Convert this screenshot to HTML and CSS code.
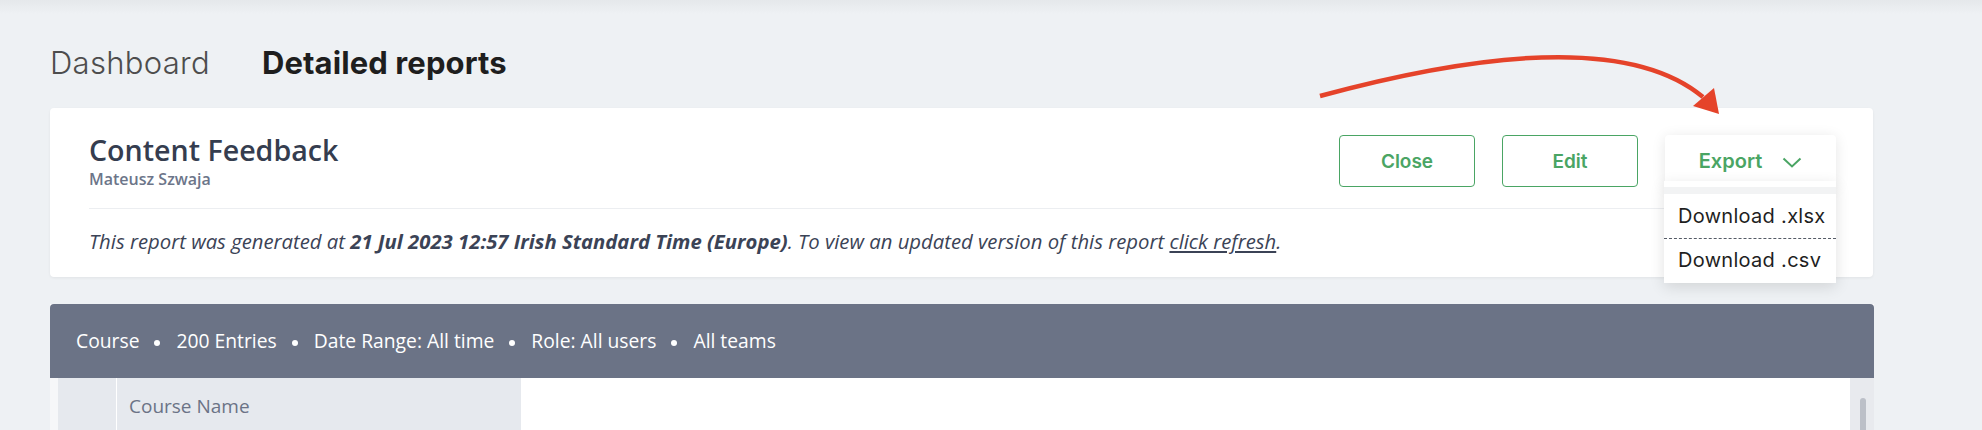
FILE: index.html
```html
<!DOCTYPE html>
<html lang="en">
<head>
    <meta charset="UTF-8">
    <meta name="viewport" content="width=device-width, initial-scale=1.0">
    <title>Detailed reports - Content Feedback</title>
    <link rel="stylesheet" href="styles.css">
</head>
<body>
    <div class="page">
        <nav class="tabs">
            <a class="tab" href="#">Dashboard</a>
            <a class="tab active" href="#">Detailed reports</a>
        </nav>

        <section class="report-card">
            <div class="report-head">
                <div class="report-title">
                    <h1>Content Feedback</h1>
                    <div class="author">Mateusz Szwaja</div>
                </div>
                <div class="actions">
                    <button class="btn" type="button">Close</button>
                    <button class="btn" type="button">Edit</button>
                    <div class="export">
                        <button class="export-btn" type="button">
                            Export
                            <svg class="chevron" width="20" height="11" viewBox="0 0 20 11"><polyline points="1.5,1.5 10,9.5 18.5,1.5" fill="none" stroke="#4aa564" stroke-width="2"/></svg>
                        </button>
                        <ul class="export-menu">
                            <li>Download .xlsx</li>
                            <li>Download .csv</li>
                        </ul>
                    </div>
                </div>
            </div>
            <p class="generated">This report was generated at <b>21 Jul 2023 12:57 Irish Standard Time (Europe)</b>. To view an updated version of this report <a href="#">click refresh</a>.</p>
        </section>

        <section class="table-panel">
            <div class="filters">Course<span class="dot"></span>200 Entries<span class="dot"></span>Date Range: All time<span class="dot"></span>Role: All users<span class="dot"></span>All teams</div>
            <div class="thead">
                <div class="edge"></div>
                <div class="th th-check"></div>
                <div class="th th-name">Course Name</div>
                <div class="th-fill"></div>
                <div class="scroll-track"><span class="thumb"></span></div>
            </div>
        </section>

        <!-- red annotation arrow pointing at Export -->
        <svg class="annotation" width="1982" height="430" viewBox="0 0 1982 430">
            <path d="M1320 96 C1460 58 1625 32 1703 97" fill="none" stroke="#e5432a" stroke-width="4.5"/>
            <polygon points="1693,106 1714,88 1719,114" fill="#e5432a"/>
        </svg>
    </div>
</body>
</html>
```

FILE: styles.css
```css
html, body {
    margin: 0;
    overflow: hidden;
}
body {
    background: linear-gradient(#e5e8eb 0, #eef1f4 14px) #eef1f4;
    font-family: "Open Sans", sans-serif;
}
.page {
    position: relative;
    height: 430px;
    padding: 45px 108px 0 50px;
    box-sizing: border-box;
}

.tabs {
    display: flex;
    gap: 52px;
    height: 36px;
}
.tab {
    font-family: Inter, sans-serif;
    font-size: 31px;
    line-height: 36px;
    font-weight: 300;
    letter-spacing: 0.3px;
    color: #4d4d4d;
    text-decoration: none;
}
.tab.active {
    font-weight: 700;
    letter-spacing: 0.1px;
    color: #1e1e1e;
}

.report-card {
    margin-top: 27px;
    background: white;
    border-radius: 4px;
    box-shadow: 0 1px 3px rgba(0, 0, 0, 0.06);
    padding: 25px 37px 23px 39px;
    width: 1823px;
    box-sizing: border-box;
}
.report-head {
    display: flex;
    justify-content: space-between;
    align-items: center;
    padding-bottom: 19px;
    border-bottom: 1px solid #eceef1;
}
.report-title h1 {
    margin: 0;
    font-size: 28.6px;
    line-height: 34px;
    font-weight: 600;
    color: #353d4f;
}
.author {
    margin-top: 2px;
    font-size: 16px;
    line-height: 20px;
    font-weight: 600;
    color: #6c7589;
}
.actions {
    display: flex;
    gap: 27px;
    align-items: center;
}
.btn {
    width: 136px;
    height: 52px;
    background: white;
    border: 1px solid #4aa564;
    border-radius: 4px;
    color: #4aa564;
    font-family: Inter, sans-serif;
    font-size: 19px;
    font-weight: 600;
    cursor: pointer;
}
.export {
    position: relative;
}
.export-btn {
    width: 171px;
    height: 52px;
    display: flex;
    align-items: center;
    justify-content: center;
    gap: 20px;
    background: white;
    border: none;
    border-radius: 4px;
    box-shadow: 0 2px 14px rgba(0, 0, 0, 0.10);
    color: #4aa564;
    font-family: Inter, sans-serif;
    font-size: 20px;
    font-weight: 600;
    cursor: pointer;
}
.chevron {
    margin-top: 2px;
}
.export-menu {
    position: absolute;
    top: 46px;
    left: -1px;
    width: 172px;
    margin: 0;
    padding: 0;
    list-style: none;
    background: white;
    box-shadow: 0 4px 14px rgba(0, 0, 0, 0.12);
    border-top: 6px solid white;
    z-index: 2;
}
.export-menu::before {
    content: "";
    display: block;
    height: 7px;
    background: #f2f3f4;
}
.export-menu li {
    font-family: Inter, sans-serif;
    font-size: 20px;
    line-height: 24px;
    letter-spacing: 0.3px;
    white-space: nowrap;
    color: #1f1f1f;
    padding: 10px 14px;
}
.export-menu li + li {
    border-top: 1px dashed #555b66;
    padding: 9px 14px 11px;
}

.generated {
    margin: 0;
    padding-top: 19px;
    font-size: 20.3px;
    line-height: 26px;
    font-style: italic;
    color: #3b4356;
}
.generated b {
    font-weight: 700;
}
.generated a {
    color: #3b4356;
}

.table-panel {
    margin-top: 27px;
    width: 1824px;
    background: white;
}
.filters {
    height: 74px;
    line-height: 74px;
    padding-left: 26px;
    background: #6b7386;
    border-radius: 4px 4px 0 0;
    color: white;
    font-size: 19.3px;
    white-space: nowrap;
}
.dot {
    display: inline-block;
    vertical-align: middle;
    width: 6px;
    height: 6px;
    border-radius: 50%;
    background: white;
    margin: 0 16px 0 15px;
}
.thead {
    display: flex;
    height: 56px;
}
.edge {
    width: 8px;
    background: #f6f7f9;
}
.th {
    background: #e6e9ee;
    color: #6b7386;
    font-size: 19px;
    line-height: 56px;
}
.th-check {
    width: 58px;
    border-right: 1px solid white;
}
.th-name {
    width: 392px;
    padding-left: 12px;
}
.th-fill {
    flex: 1;
}
.scroll-track {
    width: 24px;
    background: #e8eaee;
    position: relative;
}
.thumb {
    position: absolute;
    left: 10px;
    top: 20px;
    width: 6px;
    height: 60px;
    border-radius: 3px;
    background: #bcc0c8;
}

.annotation {
    position: absolute;
    top: 0;
    left: 0;
    pointer-events: none;
    z-index: 3;
}
```
